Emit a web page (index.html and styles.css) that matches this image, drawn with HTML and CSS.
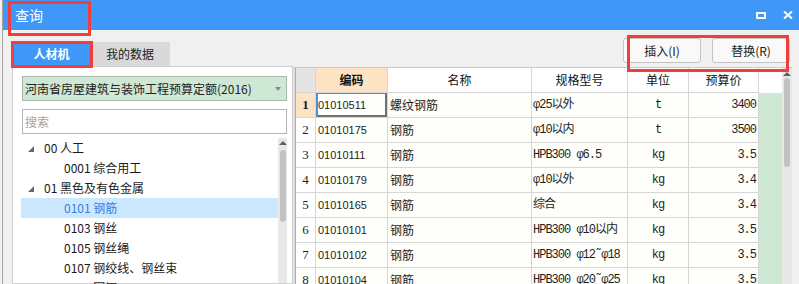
FILE: index.html
```html
<!DOCTYPE html>
<html lang="zh-CN">
<head>
  <meta charset="UTF-8" />
  <title>查询</title>
  <link rel="stylesheet" href="styles.css">
</head>
<body>
  <div class="dialog">
    <div class="titlebar">
      <span class="title">查询</span>
      <span class="win-max"></span>
      <svg class="win-close" width="10" height="8" viewBox="0 0 10 8">
        <path d="M1 0.5 L9 7.5 M9 0.5 L1 7.5" stroke="#fff" stroke-width="2" fill="none"/>
      </svg>
    </div>

    <div class="content">
      <div class="left">
        <div class="tabs">
          <div class="tab active">人材机</div>
          <div class="tab">我的数据</div>
        </div>
        <div class="panel">
          <div class="select">河南省房屋建筑与装饰工程预算定额(2016)<span class="caret"></span></div>
          <input class="search" type="text" placeholder="搜索">
          <div class="tree">
            <div class="tree-list">
              <div class="node"><i class="twisty"></i>00 人工</div>
              <div class="node leaf">0001 综合用工</div>
              <div class="node"><i class="twisty"></i>01 黑色及有色金属</div>
              <div class="node leaf selected">0101 钢筋</div>
              <div class="node leaf">0103 钢丝</div>
              <div class="node leaf">0105 钢丝绳</div>
              <div class="node leaf">0107 钢绞线、钢丝束</div>
              <div class="node leaf">0109 圆钢</div>
            </div>
            <div class="vscroll small">
              <span class="up"></span>
              <span class="thumb"></span>
            </div>
          </div>
        </div>
      </div>

      <div class="right">
        <div class="actions">
          <button class="btn">插入(I)</button>
          <button class="btn">替换(R)</button>
        </div>
        <div class="grid-wrap">
          <div class="grid">
            <div class="cell rn head"></div>
            <div class="cell head sorted">编码</div>
            <div class="cell head">名称</div>
            <div class="cell head">规格型号</div>
            <div class="cell head">单位</div>
            <div class="cell head">预算价</div>
            <div class="cell head blank"></div>

            <div class="cell rn current">1</div>
            <div class="cell code sel">01010511</div>
            <div class="cell name">螺纹钢筋</div>
            <div class="cell spec">φ25以外</div>
            <div class="cell unit">t</div>
            <div class="cell price">3400</div>
            <div class="cell extra"></div>

            <div class="cell rn">2</div>
            <div class="cell code">01010175</div>
            <div class="cell name">钢筋</div>
            <div class="cell spec">φ10以内</div>
            <div class="cell unit">t</div>
            <div class="cell price">3500</div>
            <div class="cell extra"></div>

            <div class="cell rn">3</div>
            <div class="cell code">01010111</div>
            <div class="cell name">钢筋</div>
            <div class="cell spec">HPB300 φ6.5</div>
            <div class="cell unit">kg</div>
            <div class="cell price">3.5</div>
            <div class="cell extra"></div>

            <div class="cell rn">4</div>
            <div class="cell code">01010179</div>
            <div class="cell name">钢筋</div>
            <div class="cell spec">φ10以外</div>
            <div class="cell unit">kg</div>
            <div class="cell price">3.4</div>
            <div class="cell extra"></div>

            <div class="cell rn">5</div>
            <div class="cell code">01010165</div>
            <div class="cell name">钢筋</div>
            <div class="cell spec">综合</div>
            <div class="cell unit">kg</div>
            <div class="cell price">3.4</div>
            <div class="cell extra"></div>

            <div class="cell rn">6</div>
            <div class="cell code">01010101</div>
            <div class="cell name">钢筋</div>
            <div class="cell spec">HPB300 φ10以内</div>
            <div class="cell unit">kg</div>
            <div class="cell price">3.5</div>
            <div class="cell extra"></div>

            <div class="cell rn">7</div>
            <div class="cell code">01010102</div>
            <div class="cell name">钢筋</div>
            <div class="cell spec">HPB300 φ12˜φ18</div>
            <div class="cell unit">kg</div>
            <div class="cell price">3.5</div>
            <div class="cell extra"></div>

            <div class="cell rn">8</div>
            <div class="cell code">01010104</div>
            <div class="cell name">钢筋</div>
            <div class="cell spec">HPB300 φ20˜φ25</div>
            <div class="cell unit">kg</div>
            <div class="cell price">3.5</div>
            <div class="cell extra"></div>
          </div>
          <div class="vscroll big">
            <span class="up"></span>
            <span class="thumb"></span>
          </div>
        </div>
      </div>
    </div>
  </div>

  <!-- red annotation frames drawn over the dialog -->
  <div class="mark mark-title"></div>
  <div class="mark mark-tab"></div>
  <div class="mark mark-actions"></div>
</body>
</html>
```

FILE: styles.css
```css
* {
  box-sizing: border-box;
}

html, body {
  margin: 0;
}

body {
  position: relative;
  width: 799px;
  height: 284px;
  overflow: hidden;
  background: #f4f1ec;
  font-family: "Noto Sans CJK SC", "Noto Sans", sans-serif;
  font-size: 12px;
  color: #1e1e1e;
}

.dialog {
  margin-left: 2px;
  height: 284px;
  border-left: 1px solid #a0a0a0;
  background: #f0f0f0;
  display: flex;
  flex-direction: column;
}

/* title bar */
.titlebar {
  height: 30px;
  flex: none;
  background: #3f97f7;
  color: #fff;
  display: flex;
  align-items: center;
  padding: 0 6px 0 12px;
}

.title {
  flex: 1;
  font-size: 14px;
}

.win-max {
  width: 10px;
  height: 7px;
  border: 2px solid #fff;
  margin-right: 17px;
}

.win-close {
  display: block;
}

.content {
  flex: 1;
  min-height: 0;
  display: flex;
}

/* left side: tabs + tree */
.left {
  width: 281px;
  margin-left: 9px;
  display: flex;
  flex-direction: column;
}

.tabs {
  display: flex;
  padding: 12px 0 0 1px;
}

.tab {
  height: 24px;
  line-height: 24px;
  width: 80px;
  text-align: center;
  background: #d9d9d9;
  color: #222;
}

.tab.active {
  width: 77px;
  background: #3f97f7;
  color: #fff;
  font-weight: bold;
}

.panel {
  flex: 1;
  min-height: 0;
  background: #fff;
  border: 1px solid #cfcfcf;
  padding: 9px 5px 0 9px;
  display: flex;
  flex-direction: column;
}

.select {
  position: relative;
  height: 25px;
  line-height: 23px;
  border: 1px solid #a9b9ad;
  background: #cfe8d5;
  padding-left: 2px;
  color: #222;
  white-space: nowrap;
}

.caret {
  position: absolute;
  right: 5px;
  top: 10px;
  border-style: solid;
  border-width: 4px 3px 0 3px;
  border-color: #8a8a8a transparent transparent transparent;
}

.search {
  margin-top: 8px;
  height: 25px;
  border: 1px solid #b5b5b5;
  padding: 0 2px;
  font-family: inherit;
  font-size: 12px;
  outline: none;
}

.search::placeholder {
  color: #a3a3a3;
}

.tree {
  flex: 1;
  min-height: 0;
  margin: 4px 0 0 -1px;
  display: flex;
}

.tree-list {
  flex: 1;
}

.node {
  height: 20px;
  line-height: 20px;
  padding-left: 7px;
  white-space: nowrap;
  color: #1a1a1a;
}

.node.leaf {
  padding-left: 43px;
}

.node.selected {
  background: #cce8ff;
  color: #3b7de0;
}

.twisty {
  display: inline-block;
  vertical-align: middle;
  margin: -2px 10px 0 0;
  border-style: solid;
  border-width: 0 0 6px 6px;
  border-color: transparent transparent #666 transparent;
}

/* scrollbars */
.vscroll {
  background: #e8e8e8;
  display: flex;
  flex-direction: column;
  align-items: center;
}

.vscroll .up {
  border-style: solid;
  border-width: 0 4px 4px 4px;
  border-color: transparent transparent #606060 transparent;
}

.vscroll .thumb {
  width: 6px;
  border-radius: 3px;
  background: #c2c2c2;
}

.vscroll.small {
  width: 9px;
  padding-top: 3px;
}

.vscroll.small .thumb {
  margin-top: 5px;
  height: 72px;
}

.vscroll.big {
  width: 10px;
  padding-top: 4px;
}

.vscroll.big .thumb {
  margin-top: 2px;
  height: 89px;
}

/* right side: buttons + grid */
.right {
  flex: 1;
  display: flex;
  flex-direction: column;
  min-width: 0;
}

.actions {
  display: flex;
  justify-content: flex-end;
  gap: 11px;
  padding: 8px 9px 0 0;
}

.btn {
  width: 78px;
  height: 25px;
  border: 1px solid #c4c4c4;
  border-radius: 3px;
  background: #f9f9f9;
  font-family: inherit;
  font-size: 12px;
  color: #222;
  padding: 0;
}

.grid-wrap {
  flex: 1;
  min-height: 0;
  margin: 4px 7px 0 0;
  display: flex;
  overflow: hidden;
  border-top: 1px solid #c9c9c9;
  border-left: 2px solid #e2e2e2;
  background: #fff;
}

.grid {
  display: grid;
  grid-template-columns: 20px 72px 144px 96px 61px 70px 23px;
  grid-auto-rows: 25px;
  align-content: start;
  border-left: 1px solid #ababab;
}

.cell {
  border-right: 1px solid #d6d6d6;
  border-bottom: 1px solid #d6d6d6;
  background: #fefefa;
  line-height: 24px;
  white-space: nowrap;
  overflow: hidden;
  padding: 0 2px;
}

.cell.head {
  background: #fff;
  text-align: center;
  color: #111;
}

.cell.head.sorted {
  background: #fde3c3;
  font-weight: bold;
}

.cell.rn {
  background: #fff;
  text-align: center;
  padding: 0;
  font-family: "Liberation Serif", serif;
  font-size: 13px;
}

.cell.rn.head {
  background: #e4e4e4;
}

.cell.rn.current {
  background: #fde3c3;
  font-weight: bold;
}

.cell.code {
  font-family: "Liberation Sans", sans-serif;
  font-size: 11px;
}

.cell.sel {
  box-shadow: inset 2px 1px 0 #4a90e2, inset -2px -2px 0 #707070;
}

.cell.spec,
.cell.unit,
.cell.price {
  font-family: "Liberation Mono", "Noto Sans CJK SC", monospace;
  letter-spacing: -1px;
}

.cell.spec {
  padding-left: 1px;
}

.cell.unit {
  text-align: center;
}

.cell.price {
  text-align: right;
  padding-right: 2px;
}

.cell.extra {
  background: #cde8d3;
  border-right: none;
  border-bottom: none;
}

.cell.head.blank {
  border-right: none;
  border-bottom: none;
}

/* red annotation frames */
.mark {
  position: absolute;
  border: 3px solid #f23d3d;
}

.mark-title {
  left: 8px;
  top: 1px;
  width: 83px;
  height: 35px;
}

.mark-tab {
  left: 11px;
  top: 41px;
  width: 82px;
  height: 27px;
}

.mark-actions {
  left: 627px;
  top: 35px;
  width: 162px;
  height: 37px;
}
```
